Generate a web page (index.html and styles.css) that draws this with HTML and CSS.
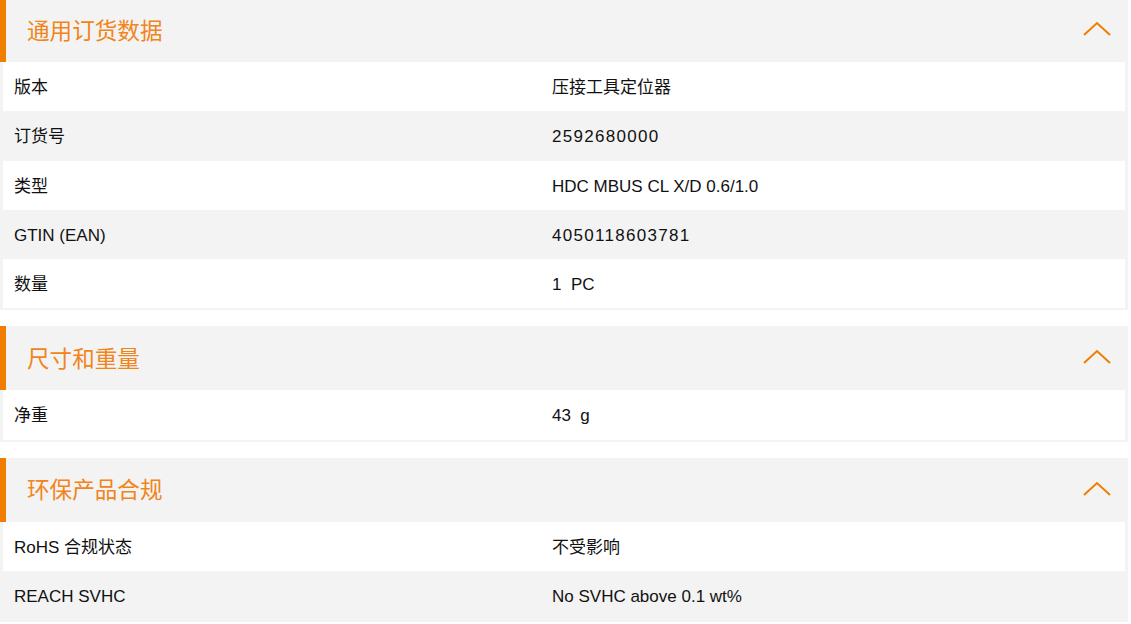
FILE: index.html
```html
<!DOCTYPE html>
<html lang="zh">
<head>
<meta charset="utf-8">
<link rel="stylesheet" href="styles.css">
</head>
<body>
<div class="page">
  <section class="panel">
    <div class="panel-head">
      <h2 class="panel-title">通用订货数据</h2>
      <svg class="chevron" width="28" height="16" viewBox="0 0 28 16"><path d="M1 14 L14 2 L27 14" fill="none" stroke="#f07d00" stroke-width="2"/></svg>
    </div>
    <div class="panel-body">
      <div class="row"><div class="cell label">版本</div><div class="cell value">压接工具定位器</div></div>
      <div class="row alt"><div class="cell label">订货号</div><div class="cell value num">2592680000</div></div>
      <div class="row"><div class="cell label">类型</div><div class="cell value">HDC MBUS CL X/D 0.6/1.0</div></div>
      <div class="row alt"><div class="cell label">GTIN (EAN)</div><div class="cell value num">4050118603781</div></div>
      <div class="row"><div class="cell label">数量</div><div class="cell value">1&nbsp; PC</div></div>
    </div>
  </section>
  <section class="panel">
    <div class="panel-head">
      <h2 class="panel-title">尺寸和重量</h2>
      <svg class="chevron" width="28" height="16" viewBox="0 0 28 16"><path d="M1 14 L14 2 L27 14" fill="none" stroke="#f07d00" stroke-width="2"/></svg>
    </div>
    <div class="panel-body">
      <div class="row"><div class="cell label">净重</div><div class="cell value">43&nbsp; g</div></div>
    </div>
  </section>
  <section class="panel">
    <div class="panel-head">
      <h2 class="panel-title">环保产品合规</h2>
      <svg class="chevron" width="28" height="16" viewBox="0 0 28 16"><path d="M1 14 L14 2 L27 14" fill="none" stroke="#f07d00" stroke-width="2"/></svg>
    </div>
    <div class="panel-body">
      <div class="row"><div class="cell label">RoHS 合规状态</div><div class="cell value">不受影响</div></div>
      <div class="row alt"><div class="cell label">REACH SVHC</div><div class="cell value">No SVHC above 0.1 wt%</div></div>
    </div>
  </section>
</div>
</body>
</html>
```

FILE: styles.css
```css
html, body {
  margin: 0;
  padding: 0;
  background: #fff;
}
body {
  font-family: "Liberation Sans", "Noto Sans CJK SC", sans-serif;
  color: #111;
  overflow: hidden;
}
.page {
  width: 1128px;
  margin-top: -2px;
  display: flex;
  flex-direction: column;
  gap: 16px;
}
.panel-head {
  height: 64px;
  background: #f3f3f3;
  border-left: 6px solid #f07d00;
  box-sizing: border-box;
  display: flex;
  align-items: center;
  justify-content: space-between;
  padding: 0 17px 0 21px;
}
.panel-title {
  margin: 0;
  margin-top: 0;
  font-family: "Noto Sans CJK SC", sans-serif;
  font-weight: 400;
  font-size: 22.6px;
  color: #f2841a;
  line-height: 1;
}
.chevron {
  display: block;
  margin-top: -2px;
}
.panel-body {
  border: 3px solid #f3f3f3;
  border-top: 0;
  border-bottom-width: 2px;
}
.row {
  display: grid;
  grid-template-columns: 538px 1fr;
  background: #fff;
}
.row.alt {
  background: #f3f3f3;
}
.cell {
  padding: 15px 11px 13px 11px;
  font-size: 17px;
  line-height: 21.3px;
}
.num {
  letter-spacing: 1.3px;
}
```
